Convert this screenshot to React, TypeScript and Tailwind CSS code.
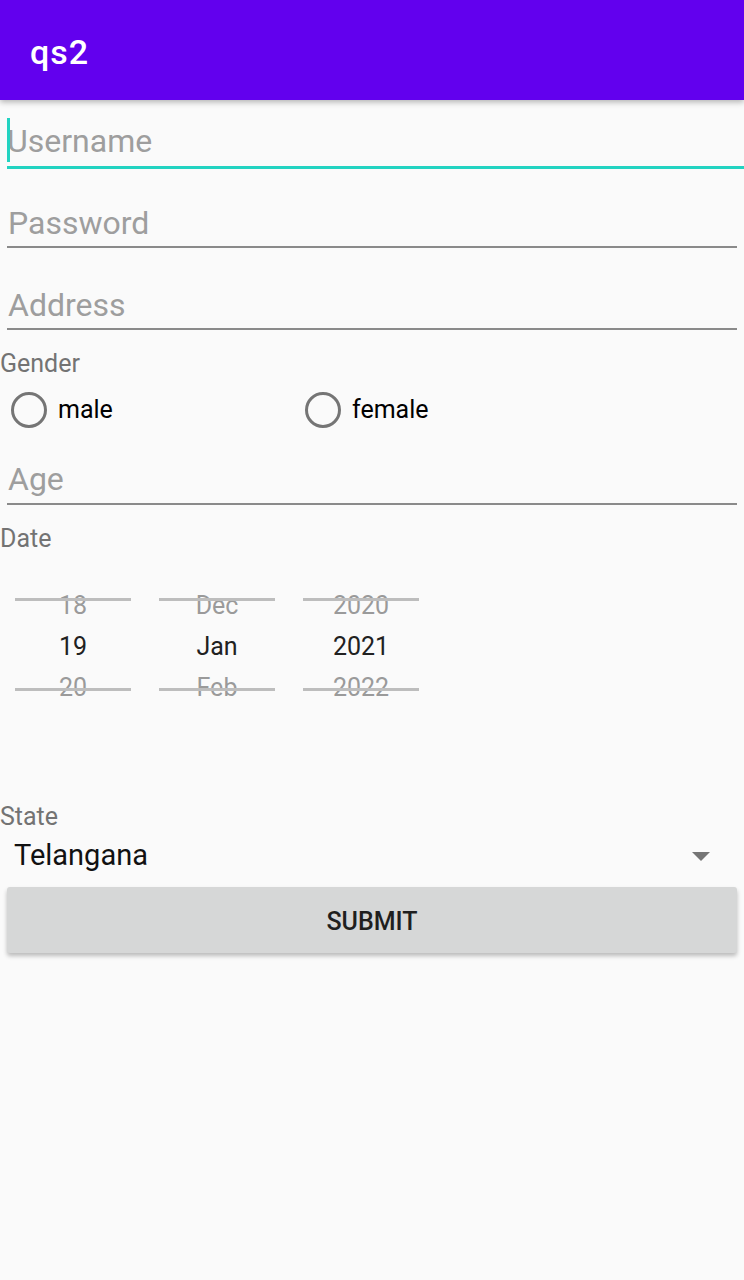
const font = { fontFamily: 'Roboto, "Noto Sans", sans-serif' };

function Field({ label, className }: { label: string; className: string }) {
  return (
    <div className={className}>
      <div className="h-[32px] text-[32px] leading-[32px] text-[#9e9e9e]">{label}</div>
    </div>
  );
}

function Radio({ label }: { label: string }) {
  return (
    <div className="flex items-center gap-[11px]">
      <span className="w-[36px] h-[36px] rounded-full border-[3px] border-[#757575]" />
      <span className="text-[25px] text-black">{label}</span>
    </div>
  );
}

function PickerColumn({ prev, value, next }: { prev: string; value: string; next: string }) {
  return (
    <div className="relative w-[116px] flex flex-col text-[25px]">
      <div className="h-[41px] flex items-center justify-center text-[#9a9a9a]">{prev}</div>
      <div className="h-[41px] flex items-center justify-center text-[#212121]">{value}</div>
      <div className="h-[41px] flex items-center justify-center text-[#9a9a9a]">{next}</div>
      <div className="absolute left-0 right-0 top-[13px] h-[3px] bg-[#bdbdbd]" />
      <div className="absolute left-0 right-0 top-[103px] h-[3px] bg-[#bdbdbd]" />
    </div>
  );
}

export default function App() {
  return (
    <div className="w-[744px] h-[1280px] bg-[#fafafa] overflow-hidden" style={font}>
      <header className="h-[100px] bg-[#6200ee] flex items-center pl-[30px] shadow-[0_2px_6px_rgba(0,0,0,0.3)] relative z-10">
        <h1 className="text-[34px] font-medium text-white tracking-[1px] mt-[4px]">qs2</h1>
      </header>

      {/* Username (focused) */}
      <div className="ml-[7px] pt-[25px] pb-[9px] border-b-[3px] border-[#22d3c1] relative">
        <div className="absolute left-0 top-[18px] w-[3px] h-[44px] bg-[#22d3c1]" />
        <div className="h-[32px] text-[32px] leading-[32px] text-[#9e9e9e]">Username</div>
      </div>

      <Field label="Password" className="mx-[7px] pt-[38px] pb-[7px] border-b-2 border-[#8a8a8a] pl-[1px]" />
      <Field label="Address" className="mx-[7px] pt-[41px] pb-[7px] border-b-2 border-[#8a8a8a] pl-[1px]" />

      <div className="mt-[20px] text-[25px] leading-[28px] text-[#737373]">Gender</div>
      <div className="h-[64px] flex items-center pl-[11px]">
        <div className="w-[294px]">
          <Radio label="male" />
        </div>
        <Radio label="female" />
      </div>

      <Field label="Age" className="mx-[7px] pt-[21px] pb-[8px] border-b-2 border-[#8a8a8a] pl-[1px]" />

      <div className="mt-[20px] text-[25px] leading-[28px] text-[#737373]">Date</div>
      <div className="mt-[32px] pl-[15px] flex gap-[28px]">
        <PickerColumn prev="18" value="19" next="20" />
        <PickerColumn prev="Dec" value="Jan" next="Feb" />
        <PickerColumn prev="2020" value="2021" next="2022" />
      </div>

      <div className="mt-[95px] text-[25px] leading-[28px] text-[#737373]">State</div>
      <div className="h-[48px] mt-[1px] flex items-center justify-between pl-[14px] pr-[34px]">
        <span className="text-[29px] text-[#111]">Telangana</span>
        <svg width="18" height="9" viewBox="0 0 18 9">
          <path d="M0 0 L18 0 L9 9 Z" fill="#757575" />
        </svg>
      </div>

      <div className="mt-[7px] mx-[7px]">
        <button className="w-full h-[66px] bg-[#d6d7d7] rounded-[3px] shadow-[0_3px_4px_rgba(0,0,0,0.25)] text-[25px] font-medium text-[#1f1f1f] flex items-center justify-center pt-[4px]">
          SUBMIT
        </button>
      </div>
    </div>
  );
}
